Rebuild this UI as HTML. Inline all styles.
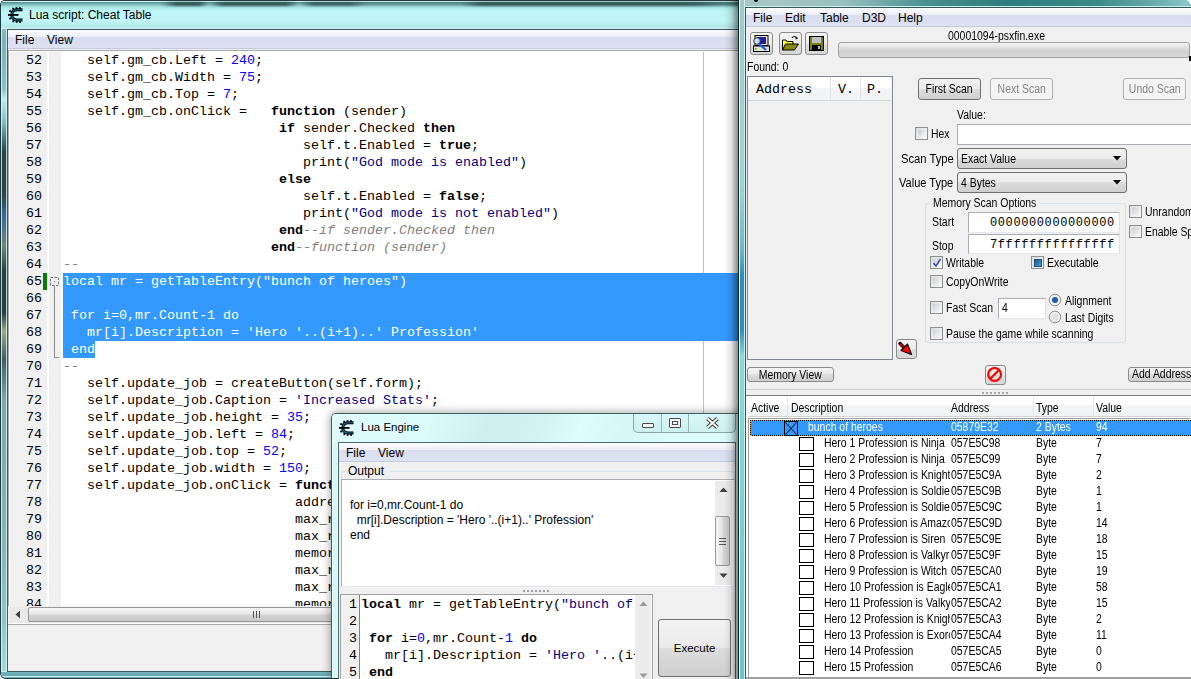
<!DOCTYPE html><html><head><meta charset="utf-8"><style>
*{margin:0;padding:0;box-sizing:border-box}
html,body{width:1191px;height:679px;overflow:hidden;background:#fff}
body{position:relative;font-family:"Liberation Sans",sans-serif;font-size:12px;color:#000}
.a{position:absolute}
.t{position:absolute;white-space:pre;line-height:1}
.mono{font-family:"Liberation Mono",monospace}
.code{position:absolute;white-space:pre;font-family:"Liberation Mono",monospace;font-size:13.333px;line-height:17px;height:17px}
.k{font-weight:bold}
.ms{position:absolute;white-space:pre;line-height:1;font-size:12px;transform:scaleX(0.87);transform-origin:0 0}
.msi{display:inline-block;font-size:12px;transform:scaleX(0.87)}
.n{color:#0000ff}
.s{color:#000080}
.c{color:#808080;font-style:italic}
.sel{color:#fff}
.menubar{position:absolute;background:linear-gradient(#fdfdfe 0,#f4f5fa 2px,#e6e9f5 6px,#dadff0 10px,#dde1f0 17px,#c5c9dc 18px)}
.cb{position:absolute;width:13px;height:13px;border:1px solid #8e8f8f;background:linear-gradient(135deg,#dcdcdc,#fafafa)}
.cb::after{content:"";position:absolute;left:2px;top:2px;width:7px;height:7px;background:linear-gradient(135deg,#cbcfd5,#f6f6f6)}
.btn{position:absolute;border:1px solid #707070;border-radius:3px;background:linear-gradient(#f2f2f2 0,#ebebeb 50%,#dddddd 50%,#cfcfcf 100%);text-align:center}
.btnd{position:absolute;border:1px solid #adb2b5;border-radius:3px;background:#f4f4f4;color:#838383;text-align:center}
.combo{position:absolute;border:1px solid #707070;border-radius:3px;background:linear-gradient(#f2f2f2 0,#ebebeb 50%,#dddddd 50%,#cfcfcf 100%)}
.edit{position:absolute;background:#fff;border:1px solid #abadb3;border-top-color:#abadb3;border-left-color:#e2e3ea;border-right-color:#dbdfe6;border-bottom-color:#e3e9ef}
</style></head><body>
<div class="a" style="left:0;top:0;width:760px;height:679px;border:1px solid #1d3b40;border-right:none;border-radius:5px 0 0 6px;overflow:hidden;background:#78b0c0"><div class="a" style="left:0;top:0;width:6px;height:679px;background:linear-gradient(#a8d4d4 0,#80b0b8 40px,#8cc0c8 88px,#c0f0f0 98px,#80b8c0 122px,#284848 150px,#284848 195px,#3a68a0 215px,#708878 245px,#2a4040 270px,#2a4040 312px,#a0a880 330px,#406060 358px,#80a8a8 400px,#88b4b4 540px,#90c4c8 620px,#a8dcdc 679px)"></div><div class="a" style="left:0;top:0;width:1px;height:679px;background:rgba(230,255,255,0.75)"></div><div class="a" style="left:5px;top:28px;width:1px;height:650px;background:rgba(220,255,255,0.8)"></div><div class="a" style="left:0;top:0;width:760px;height:28px;background:linear-gradient(#e0f4f4 0,#e0f4f4 1px,#4f8a8a 1px,#78b4b4 3px,#a8e4e4 6px,#bdf4f4 10px,#c2f6f6 20px,#aee6e6 26px,#cdeeee 27px)"></div><div class="a" style="left:0;top:1px;width:760px;height:4px;filter:blur(1.2px);background:linear-gradient(90deg,rgba(40,80,80,0) 0,rgba(40,80,80,0) 160px,rgba(30,60,60,.8) 175px,rgba(30,60,60,.8) 198px,rgba(40,80,80,0) 208px,rgba(30,60,60,.8) 222px,rgba(30,60,60,.8) 285px,rgba(40,80,80,0) 298px,rgba(30,60,60,.7) 312px,rgba(30,60,60,.7) 350px,rgba(40,80,80,.3) 365px,rgba(40,80,80,.3) 460px,rgba(30,60,60,.8) 480px,rgba(30,60,60,.8) 690px,rgba(30,60,60,.5) 720px)"></div><div class="a" style="left:0;top:670px;width:760px;height:8px;background:linear-gradient(#c8f0f0 0,#c8f0f0 1px,#78b4bc 1px,#64a6b0 5px,#c8f0f0 5px,#c8f0f0 6px,#78b0b8 6px)"></div></div>
<div class="a" style="left:7px;top:29px;width:760px;height:643px;background:#f0f0f0;border:1px solid #3a5a5e;border-right:none"></div>
<svg class="a" style="left:8px;top:7px" width="16" height="16" viewBox="0 0 16 16"><g fill="#000"><rect x="4.2" y="0.8" width="1.8" height="1.8"/><rect x="7.6" y="0.2" width="1.8" height="1.8"/><rect x="11" y="0.2" width="1.8" height="1.8"/><rect x="1.2" y="3.2" width="1.8" height="1.8"/><rect x="1.2" y="10.6" width="1.8" height="1.8"/><rect x="4.4" y="13.4" width="1.8" height="1.8"/><rect x="7.8" y="14" width="1.8" height="1.8"/><rect x="11.2" y="14" width="1.8" height="1.8"/></g><path d="M14.5 2.8 L9 2.8 Q5.5 2.8 4.2 5.5 Q3.2 7.8 4.2 10.2 Q5.5 13 9 13 L14.5 13" fill="none" stroke="#000" stroke-width="3"/><path d="M14 2.8 L9 2.8 Q5.5 2.8 4.2 5.5 Q3.2 7.8 4.2 10.2 Q5.5 13 9 13 L14 13" fill="none" stroke="#1a6ea6" stroke-width="1.1"/><path d="M0 7.9 L10.5 7.9" stroke="#000" stroke-width="1.8"/></svg>
<div class="t" style="left:29px;top:9px;font-size:12px;color:#000;">Lua script: Cheat Table</div>
<div class="a" style="left:8px;top:30px;width:760px;height:19px;background:linear-gradient(#fcfcfe 0,#f7f8fc 2px,#eceef8 7px,#d9ddef 7px,#dde2f2 18px,#c4c8dc 18px)"></div>
<div class="t" style="left:15px;top:34px;font-size:12px">File</div>
<div class="t" style="left:47px;top:34px;font-size:12px">View</div>
<div class="a" style="left:8px;top:49px;width:760px;height:1px;background:#f0f0f0"></div>
<div class="a" style="left:8px;top:50px;width:760px;height:556px;background:#fff;border-top:1px solid #a8a8a8;border-left:1px solid #a8a8a8"></div>
<div class="a" style="left:10px;top:52px;width:37px;height:554px;background:#f0f0f0"></div>
<div class="a" style="left:49px;top:52px;width:12px;height:554px;background:#f0f0f0"></div>
<div class="a" style="left:703px;top:52px;width:1px;height:554px;background:#c0c0c0"></div>
<div class="a" style="left:63px;top:273px;width:720px;height:68px;background:#3399ff"></div>
<div class="a" style="left:63px;top:341px;width:32px;height:17px;background:#3399ff"></div>
<div class="a" style="left:8px;top:52px;width:730px;height:554px;overflow:hidden">
<div class="code" style="left:55px;top:0px">   self.gm_cb.Left = <span class="n">240</span>;</div>
<div class="code" style="left:18px;top:0px;width:16px;text-align:right">52</div>
<div class="code" style="left:55px;top:17px">   self.gm_cb.Width = <span class="n">75</span>;</div>
<div class="code" style="left:18px;top:17px;width:16px;text-align:right">53</div>
<div class="code" style="left:55px;top:34px">   self.gm_cb.Top = <span class="n">7</span>;</div>
<div class="code" style="left:18px;top:34px;width:16px;text-align:right">54</div>
<div class="code" style="left:55px;top:51px">   self.gm_cb.onClick =   <span class="k">function</span> (sender)</div>
<div class="code" style="left:18px;top:51px;width:16px;text-align:right">55</div>
<div class="code" style="left:55px;top:68px">                           <span class="k">if</span> sender.Checked <span class="k">then</span></div>
<div class="code" style="left:18px;top:68px;width:16px;text-align:right">56</div>
<div class="code" style="left:55px;top:85px">                              self.t.Enabled = <span class="k">true</span>;</div>
<div class="code" style="left:18px;top:85px;width:16px;text-align:right">57</div>
<div class="code" style="left:55px;top:102px">                              print(<span class="s">"God mode is enabled"</span>)</div>
<div class="code" style="left:18px;top:102px;width:16px;text-align:right">58</div>
<div class="code" style="left:55px;top:119px">                           <span class="k">else</span></div>
<div class="code" style="left:18px;top:119px;width:16px;text-align:right">59</div>
<div class="code" style="left:55px;top:136px">                              self.t.Enabled = <span class="k">false</span>;</div>
<div class="code" style="left:18px;top:136px;width:16px;text-align:right">60</div>
<div class="code" style="left:55px;top:153px">                              print(<span class="s">"God mode is not enabled"</span>)</div>
<div class="code" style="left:18px;top:153px;width:16px;text-align:right">61</div>
<div class="code" style="left:55px;top:170px">                           <span class="k">end</span><span class="c">--if sender.Checked then</span></div>
<div class="code" style="left:18px;top:170px;width:16px;text-align:right">62</div>
<div class="code" style="left:55px;top:187px">                          <span class="k">end</span><span class="c">--function (sender)</span></div>
<div class="code" style="left:18px;top:187px;width:16px;text-align:right">63</div>
<div class="code" style="left:55px;top:204px"><span class="c">--</span></div>
<div class="code" style="left:18px;top:204px;width:16px;text-align:right">64</div>
<div class="code" style="left:55px;top:221px"><span class="sel">local mr = getTableEntry("bunch of heroes")</span></div>
<div class="code" style="left:18px;top:221px;width:16px;text-align:right">65</div>
<div class="code" style="left:55px;top:238px"><span class="sel"></span></div>
<div class="code" style="left:18px;top:238px;width:16px;text-align:right">66</div>
<div class="code" style="left:55px;top:255px"><span class="sel"> for i=0,mr.Count-1 do</span></div>
<div class="code" style="left:18px;top:255px;width:16px;text-align:right">67</div>
<div class="code" style="left:55px;top:272px"><span class="sel">   mr[i].Description = 'Hero '..(i+1)..' Profession'</span></div>
<div class="code" style="left:18px;top:272px;width:16px;text-align:right">68</div>
<div class="code" style="left:55px;top:289px"><span class="sel"> end</span></div>
<div class="code" style="left:18px;top:289px;width:16px;text-align:right">69</div>
<div class="code" style="left:55px;top:306px"><span class="c">--</span></div>
<div class="code" style="left:18px;top:306px;width:16px;text-align:right">70</div>
<div class="code" style="left:55px;top:323px">   self.update_job = createButton(self.form);</div>
<div class="code" style="left:18px;top:323px;width:16px;text-align:right">71</div>
<div class="code" style="left:55px;top:340px">   self.update_job.Caption = <span class="s">'Increased Stats'</span>;</div>
<div class="code" style="left:18px;top:340px;width:16px;text-align:right">72</div>
<div class="code" style="left:55px;top:357px">   self.update_job.height = <span class="n">35</span>;</div>
<div class="code" style="left:18px;top:357px;width:16px;text-align:right">73</div>
<div class="code" style="left:55px;top:374px">   self.update_job.left = <span class="n">84</span>;</div>
<div class="code" style="left:18px;top:374px;width:16px;text-align:right">74</div>
<div class="code" style="left:55px;top:391px">   self.update_job.top = <span class="n">52</span>;</div>
<div class="code" style="left:18px;top:391px;width:16px;text-align:right">75</div>
<div class="code" style="left:55px;top:408px">   self.update_job.width = <span class="n">150</span>;</div>
<div class="code" style="left:18px;top:408px;width:16px;text-align:right">76</div>
<div class="code" style="left:55px;top:425px">   self.update_job.onClick = <span class="k">function</span> (sender)</div>
<div class="code" style="left:18px;top:425px;width:16px;text-align:right">77</div>
<div class="code" style="left:55px;top:442px">                             address = </div>
<div class="code" style="left:18px;top:442px;width:16px;text-align:right">78</div>
<div class="code" style="left:55px;top:459px">                             max_ram = </div>
<div class="code" style="left:18px;top:459px;width:16px;text-align:right">79</div>
<div class="code" style="left:55px;top:476px">                             max_rom = </div>
<div class="code" style="left:18px;top:476px;width:16px;text-align:right">80</div>
<div class="code" style="left:55px;top:493px">                             memory = </div>
<div class="code" style="left:18px;top:493px;width:16px;text-align:right">81</div>
<div class="code" style="left:55px;top:510px">                             max_rec = </div>
<div class="code" style="left:18px;top:510px;width:16px;text-align:right">82</div>
<div class="code" style="left:55px;top:527px">                             max_res = </div>
<div class="code" style="left:18px;top:527px;width:16px;text-align:right">83</div>
<div class="code" style="left:55px;top:544px">                             memory2 = </div>
<div class="code" style="left:18px;top:544px;width:16px;text-align:right">84</div>
</div>
<div class="a" style="left:43px;top:273px;width:4px;height:17px;background:#008000"></div>
<svg class="a" style="left:50px;top:277px" width="10" height="10"><rect x="0.5" y="0.5" width="8" height="8" fill="none" stroke="#707070" stroke-dasharray="2.5 1.5"/><rect x="4" y="4" width="1" height="1" fill="#707070"/></svg>
<div class="a" style="left:54px;top:286px;width:1px;height:72px;background:#8a8a8a"></div>
<div class="a" style="left:54px;top:357px;width:5px;height:1px;background:#909090"></div>
<div class="a" style="left:10px;top:607px;width:760px;height:16px;background:#e9e9e9"></div>
<svg class="a" style="left:15px;top:610px" width="6" height="9"><path d="M5 0.5 L0.5 4.5 L5 8.5 Z" fill="#404040"/></svg>
<div class="a" style="left:28px;top:607px;width:500px;height:15px;border:1px solid #979797;border-radius:2px;background:linear-gradient(#f6f6f6,#e6e6e6 45%,#d4d4d4 55%,#cacaca)"></div>
<div class="a" style="left:253px;top:611px;width:1px;height:7px;background:#555"></div>
<div class="a" style="left:256px;top:611px;width:1px;height:7px;background:#555"></div>
<div class="a" style="left:259px;top:611px;width:1px;height:7px;background:#555"></div>
<div class="a" style="left:8px;top:623px;width:760px;height:1px;background:#fff"></div>
<div class="a" style="left:8px;top:624px;width:760px;height:1px;background:#a8a8a8"></div>
<div class="a" style="left:331px;top:413px;width:420px;height:265px;background:linear-gradient(90deg,#e8ffff 0,#e8ffff 1px,#d8f8f8 1px,#d8f8f8 5px,#e8ffff 6px,#d9f8f8 100%);border-radius:5px 0 0 0;border:1px solid #3f5f63;border-right:none;border-bottom:none;box-shadow:0 0 9px 1px rgba(0,0,0,0.35)"></div>
<div class="a" style="left:332px;top:414px;width:418px;height:28px;background:linear-gradient(112deg,#dffbfb 0,#dcfafa 90px,#cdeff0 150px,#d3f3f3 200px,#ddfcfc 235px,#d6f6f6 280px,#dcfcfc 320px);border-radius:4px 0 0 0"></div>
<svg class="a" style="left:339px;top:420px" width="16" height="16" viewBox="0 0 16 16"><g fill="#000"><rect x="4.2" y="0.8" width="1.8" height="1.8"/><rect x="7.6" y="0.2" width="1.8" height="1.8"/><rect x="11" y="0.2" width="1.8" height="1.8"/><rect x="1.2" y="3.2" width="1.8" height="1.8"/><rect x="1.2" y="10.6" width="1.8" height="1.8"/><rect x="4.4" y="13.4" width="1.8" height="1.8"/><rect x="7.8" y="14" width="1.8" height="1.8"/><rect x="11.2" y="14" width="1.8" height="1.8"/></g><path d="M14.5 2.8 L9 2.8 Q5.5 2.8 4.2 5.5 Q3.2 7.8 4.2 10.2 Q5.5 13 9 13 L14.5 13" fill="none" stroke="#000" stroke-width="3"/><path d="M14 2.8 L9 2.8 Q5.5 2.8 4.2 5.5 Q3.2 7.8 4.2 10.2 Q5.5 13 9 13 L14 13" fill="none" stroke="#1a6ea6" stroke-width="1.1"/><path d="M0 7.9 L10.5 7.9" stroke="#000" stroke-width="1.8"/></svg>
<div class="t" style="left:361px;top:422px;font-size:11.5px">Lua Engine</div>
<div class="a" style="left:633px;top:414px;width:103px;height:19px;border:1px solid #8aa4a8;border-top:none;border-radius:0 0 5px 5px;background:linear-gradient(#d9f6f7,#cdf1f2)"></div>
<div class="a" style="left:661px;top:414px;width:1px;height:18px;background:#9ab4b8"></div>
<div class="a" style="left:688px;top:414px;width:1px;height:18px;background:#9ab4b8"></div>
<div class="a" style="left:642px;top:423px;width:12px;height:5px;border:1px solid #4a4a4a;background:#f4f4f4;border-radius:1px"></div>
<div class="a" style="left:669px;top:418px;width:12px;height:10px;border:1px solid #4a4a4a;background:#f4f4f4;border-radius:1px"></div>
<div class="a" style="left:672px;top:421px;width:6px;height:4px;border:1px solid #4a4a4a"></div>
<svg class="a" style="left:706px;top:417px" width="13" height="12"><path d="M1.5 1.5 L11.5 10.5 M11.5 1.5 L1.5 10.5" stroke="#3a3a3a" stroke-width="4"/><path d="M1.5 1.5 L11.5 10.5 M11.5 1.5 L1.5 10.5" stroke="#f4f4f4" stroke-width="2"/></svg>
<div class="a" style="left:338px;top:442px;width:400px;height:237px;background:#f0f0f0;border:1px solid #4a6a6e;border-right:none;border-bottom:none"></div>
<div class="a" style="left:339px;top:443px;width:399px;height:19px;background:linear-gradient(#fcfcfe 0,#f7f8fc 2px,#eceef8 7px,#d9ddef 7px,#dde2f2 18px,#c4c8dc 18px)"></div>
<div class="t" style="left:346px;top:447px;font-size:12px">File</div>
<div class="t" style="left:378px;top:447px;font-size:12px">View</div>
<div class="a" style="left:735px;top:442px;width:3px;height:237px;background:linear-gradient(90deg,#4a6a6e 0,#4a6a6e 1px,#e0fcfc 1px)"></div>
<div class="a" style="left:341px;top:471px;width:394px;height:116px;border:1px solid #d5dfe5;border-radius:3px"></div>
<div class="a" style="left:346px;top:464px;width:44px;height:14px;background:#f0f0f0"></div>
<div class="t" style="left:348px;top:465px;font-size:12px">Output</div>
<div class="a" style="left:341px;top:479px;width:394px;height:108px;background:#fff;border:1px solid #abadb3;border-right-color:#dbdfe6;border-bottom-color:#e3e9ef"></div>
<div class="t" style="left:350px;top:499px;font-size:12px">for i=0,mr.Count-1 do</div>
<div class="t" style="left:350px;top:514px;font-size:12px">  mr[i].Description = 'Hero '..(i+1)..' Profession'</div>
<div class="t" style="left:350px;top:529px;font-size:12px">end</div>
<div class="a" style="left:715px;top:481px;width:17px;height:104px;background:#ececec"></div>
<svg class="a" style="left:719px;top:487px" width="9" height="6"><path d="M0.5 5 L4.5 0.5 L8.5 5 Z" fill="#404040"/></svg>
<svg class="a" style="left:719px;top:573px" width="9" height="6"><path d="M0.5 0.5 L4.5 5 L8.5 0.5 Z" fill="#404040"/></svg>
<div class="a" style="left:715px;top:516px;width:15px;height:50px;border:1px solid #979797;border-radius:2px;background:linear-gradient(90deg,#f6f6f6,#e6e6e6 45%,#d4d4d4 55%,#cacaca)"></div>
<div class="a" style="left:719px;top:538px;width:7px;height:1px;background:#555"></div>
<div class="a" style="left:719px;top:541px;width:7px;height:1px;background:#555"></div>
<div class="a" style="left:719px;top:544px;width:7px;height:1px;background:#555"></div>
<div class="a" style="left:523px;top:590px;width:2px;height:2px;background:#a0a0a0"></div>
<div class="a" style="left:527px;top:590px;width:2px;height:2px;background:#a0a0a0"></div>
<div class="a" style="left:531px;top:590px;width:2px;height:2px;background:#a0a0a0"></div>
<div class="a" style="left:535px;top:590px;width:2px;height:2px;background:#a0a0a0"></div>
<div class="a" style="left:539px;top:590px;width:2px;height:2px;background:#a0a0a0"></div>
<div class="a" style="left:543px;top:590px;width:2px;height:2px;background:#a0a0a0"></div>
<div class="a" style="left:547px;top:590px;width:2px;height:2px;background:#a0a0a0"></div>
<div class="a" style="left:340px;top:594px;width:313px;height:90px;background:#fff;border:1px solid #a0a0a0"></div>
<div class="a" style="left:341px;top:595px;width:18px;height:90px;background:#f0f0f0"></div>
<div class="a" style="left:359px;top:595px;width:1px;height:90px;background:#808080"></div>
<div class="a" style="left:341px;top:595px;width:294px;height:84px;overflow:hidden">
<div class="code" style="left:20px;top:1px"><span class="k">local</span> mr = getTableEntry(<span class="s">"bunch of heroes"</span>)</div>
<div class="code" style="left:8px;top:1px">1</div>
<div class="code" style="left:20px;top:18px"></div>
<div class="code" style="left:8px;top:18px">2</div>
<div class="code" style="left:20px;top:35px"> <span class="k">for</span> i=<span class="n">0</span>,mr.Count-<span class="n">1</span> <span class="k">do</span></div>
<div class="code" style="left:8px;top:35px">3</div>
<div class="code" style="left:20px;top:52px">   mr[i].Description = <span class="s">'Hero '</span>..(i+1)..<span class="s">' Profession'</span></div>
<div class="code" style="left:8px;top:52px">4</div>
<div class="code" style="left:20px;top:69px"> <span class="k">end</span></div>
<div class="code" style="left:8px;top:69px">5</div>
</div>
<div class="a" style="left:635px;top:595px;width:16px;height:84px;background:#ececec"></div>
<svg class="a" style="left:639px;top:601px" width="9" height="6"><path d="M0.5 5 L4.5 0.5 L8.5 5 Z" fill="#9a9a9a"/></svg>
<svg class="a" style="left:639px;top:673px" width="9" height="6"><path d="M0.5 0.5 L4.5 5 L8.5 0.5 Z" fill="#9a9a9a"/></svg>
<div class="btn" style="left:658px;top:619px;width:73px;height:58px;line-height:56px;font-size:11.5px">Execute</div>
<div class="a" style="left:724px;top:0px;width:14px;height:679px;background:linear-gradient(90deg,rgba(0,0,0,0),rgba(0,0,0,0.1) 50%,rgba(0,0,0,0.45))"></div>
<div class="a" style="left:738px;top:0px;width:460px;height:679px;background:linear-gradient(90deg,#14282a 0,#14282a 1px,#e0fafa 1px,#e0fafa 2px,#88c4c4 2px,#8cd0d0 6px,#d0f2f2 6px,#d0f2f2 7px,#335a5a 7px,#335a5a 8px)"></div>
<div class="a" style="left:740px;top:0px;width:4px;height:679px;background:linear-gradient(#a0c8c8 0,#a8d0d0 150px,#9cd4d4 185px,#6cb8c8 250px,#2a90c0 275px,#2a90c0 330px,#88d8d8 356px,#80d4d4 440px,#70c4c4 679px)"></div>
<div class="a" style="left:745px;top:0px;width:460px;height:8px;background:linear-gradient(rgba(0,0,0,0) 0,rgba(0,0,0,0) 6px,#d0f0f0 6px,#d0f0f0 7px,#305858 7px),linear-gradient(90deg,#a8c8c8 0,#98c0c0 100px,#4a9090 180px,#2f7c7e 260px,#3a8a8a 350px,#60a6a6 400px,#88c4c4 440px)"></div>
<div class="a" style="left:746px;top:8px;width:460px;height:671px;background:#f0f0f0"></div>
<div class="a" style="left:746px;top:8px;width:460px;height:19px;background:linear-gradient(#fcfcfe 0,#f7f8fc 2px,#eceef8 7px,#d9ddef 7px,#dde2f2 18px,#c4c8dc 18px)"></div>
<div class="t" style="left:753px;top:12px;font-size:12px">File</div>
<div class="t" style="left:785px;top:12px;font-size:12px">Edit</div>
<div class="t" style="left:820px;top:12px;font-size:12px">Table</div>
<div class="t" style="left:862px;top:12px;font-size:12px">D3D</div>
<div class="t" style="left:898px;top:12px;font-size:12px">Help</div>
<div class="a" style="left:750px;top:32px;width:23px;height:23px;border:1px solid #8a8a8a;border-radius:3px;background:linear-gradient(#f4f4f4,#ececec 50%,#dedede 50%,#d6d6d6)"></div>
<div class="a" style="left:779px;top:32px;width:23px;height:23px;border:1px solid #8a8a8a;border-radius:3px;background:linear-gradient(#f4f4f4,#ececec 50%,#dedede 50%,#d6d6d6)"></div>
<div class="a" style="left:805px;top:32px;width:23px;height:23px;border:1px solid #8a8a8a;border-radius:3px;background:linear-gradient(#f4f4f4,#ececec 50%,#dedede 50%,#d6d6d6)"></div>
<svg class="a" style="left:753px;top:35px" width="17" height="17" viewBox="0 0 17 17">
<rect x="2" y="0.5" width="13" height="10" fill="#e8e4d0" stroke="#000" stroke-width="1"/>
<rect x="4" y="2" width="9" height="7" fill="#2020a0"/>
<rect x="0.5" y="11" width="16" height="5.5" fill="#e8e4d0" stroke="#000" stroke-width="1"/>
<circle cx="4" cy="6" r="3.3" fill="#c8e0ff" stroke="#303030" stroke-width="1"/>
<path d="M6 9 L13 15" stroke="#1060ff" stroke-width="2.2"/>
<rect x="2" y="13" width="1.5" height="1.5" fill="#00c000"/>
</svg>
<svg class="a" style="left:782px;top:35px" width="17" height="16" viewBox="0 0 17 16">
<path d="M10 3 Q12 0 15 3" fill="none" stroke="#000" stroke-width="1.2"/><path d="M14 1.5 L16 3.5 L13.5 4.5Z" fill="#000"/>
<path d="M0.5 5 L4 5 L5 6.5 L11 6.5 L11 9 L0.5 15 Z" fill="#ffff40" stroke="#000" stroke-width="1"/>
<path d="M3.5 9 L16.5 9 L12.5 15 L0.5 15 Z" fill="#8a8a10" stroke="#000" stroke-width="1"/>
</svg>
<svg class="a" style="left:809px;top:36px" width="15" height="15" viewBox="0 0 15 15">
<rect x="0" y="0" width="15" height="15" fill="#000"/>
<rect x="1" y="1" width="13" height="13" fill="#808000"/>
<rect x="3" y="1" width="9" height="6" fill="#c0c0c0"/>
<rect x="3" y="9" width="9" height="5" fill="#000"/>
<rect x="9" y="10" width="2" height="3" fill="#c0c0c0"/>
</svg>
<div class="ms" style="left:948px;top:30px;">00001094-psxfin.exe</div>
<div class="a" style="left:838px;top:42px;width:352px;height:16px;border:1px solid #a0a0a0;border-radius:3px;background:linear-gradient(#f4f4f4 0,#dcdcdc 40%,#cfcfcf 60%,#d8d8d8)"></div>
<div class="a" style="left:1189px;top:56px;width:3px;height:5px;background:#000"></div>
<div class="a" style="left:754px;top:0px;width:4px;height:2px;background:#000;border-radius:0 0 2px 2px"></div>
<svg class="a" style="left:1186px;top:0" width="5" height="5"><path d="M0 0 H5 V4 H4 V3 H3 V1 H1 V0Z" fill="#fff"/></svg>
<div class="ms" style="left:747px;top:61px;">Found: 0</div>
<div class="a" style="left:747px;top:76px;width:146px;height:284px;background:#f0f0f0;border:1px solid #828790"></div>
<div class="a" style="left:748px;top:77px;width:143px;height:24px;background:linear-gradient(#fff 0,#fff 45%,#f3f4f6 50%,#f1f2f4 100%);border-bottom:1px solid #d5d5d5"></div>
<div class="a" style="left:830px;top:77px;width:1px;height:23px;background:#e4e5e7"></div>
<div class="a" style="left:860px;top:77px;width:1px;height:23px;background:#e4e5e7"></div>
<div class="t" style="left:756px;top:83px;font-family:'Liberation Mono',monospace;font-size:13.33px">Address</div>
<div class="t" style="left:838px;top:83px;font-family:'Liberation Mono',monospace;font-size:13.33px">V.</div>
<div class="t" style="left:867px;top:83px;font-family:'Liberation Mono',monospace;font-size:13.33px">P.</div>
<div class="btn" style="left:918px;top:78px;width:63px;height:22px;line-height:20px;"><span class="msi">First Scan</span></div>
<div class="btnd" style="left:990px;top:78px;width:63px;height:22px;line-height:20px;"><span class="msi">Next Scan</span></div>
<div class="btnd" style="left:1123px;top:78px;width:63px;height:22px;line-height:20px;"><span class="msi">Undo Scan</span></div>
<div class="ms" style="left:957px;top:109px;">Value:</div>
<div class="cb" style="left:915px;top:127px"></div>
<div class="ms" style="left:931px;top:128px;">Hex</div>
<div class="a" style="left:957px;top:124px;width:240px;height:21px;background:#fff;border:1px solid #abadb3;border-right:none"></div>
<div class="ms" style="left:901px;top:153px;transform:scaleX(0.935)">Scan Type</div>
<div class="ms" style="left:899px;top:177px;transform:scaleX(0.92)">Value Type</div>
<div class="combo" style="left:957px;top:148px;width:170px;height:21px"></div>
<div class="ms" style="left:961px;top:153px;">Exact Value</div>
<svg class="a" style="left:1113px;top:156px" width="8" height="5"><path d="M0 0 L8 0 L4 4.5 Z" fill="#000"/></svg>
<div class="combo" style="left:957px;top:172px;width:170px;height:21px"></div>
<div class="ms" style="left:961px;top:177px;">4 Bytes</div>
<svg class="a" style="left:1113px;top:180px" width="8" height="5"><path d="M0 0 L8 0 L4 4.5 Z" fill="#000"/></svg>
<div class="a" style="left:925px;top:203px;width:201px;height:140px;border:1px solid #d5dfe5;border-radius:3px"></div>
<div class="a" style="left:930px;top:196px;width:110px;height:14px;background:#f0f0f0"></div>
<div class="ms" style="left:933px;top:197px;">Memory Scan Options</div>
<div class="ms" style="left:932px;top:216px;">Start</div>
<div class="ms" style="left:932px;top:240px;">Stop</div>
<div class="a" style="left:968px;top:212px;width:152px;height:21px;background:#fff;border:1px solid #abadb3;border-right-color:#dbdfe6;border-bottom-color:#e3e9ef"></div>
<div class="a" style="left:968px;top:234px;width:152px;height:20px;background:#fff;border:1px solid #abadb3;border-right-color:#dbdfe6;border-bottom-color:#e3e9ef"></div>
<div class="t" style="left:990px;top:217px;font-family:'Liberation Mono',monospace;font-size:12px;letter-spacing:0.6px">0000000000000000</div>
<div class="t" style="left:990px;top:239px;font-family:'Liberation Mono',monospace;font-size:12px;letter-spacing:0.6px">7fffffffffffffff</div>
<div class="cb" style="left:930px;top:256px"></div>
<svg class="a" style="left:932px;top:258px" width="10" height="10"><path d="M1.5 5 L4 8 L8.5 1" fill="none" stroke="#3a52a8" stroke-width="1.6"/></svg>
<div class="ms" style="left:946px;top:257px;">Writable</div>
<div class="cb" style="left:1031px;top:256px"></div>
<div class="a" style="left:1034px;top:259px;width:8px;height:8px;background:linear-gradient(135deg,#1a5c9a,#3ea0d8);border:1px solid #20507e"></div>
<div class="ms" style="left:1047px;top:257px;">Executable</div>
<div class="cb" style="left:930px;top:275px"></div>
<div class="ms" style="left:946px;top:276px;">CopyOnWrite</div>
<div class="cb" style="left:930px;top:301px"></div>
<div class="ms" style="left:946px;top:302px;">Fast Scan</div>
<div class="a" style="left:998px;top:298px;width:48px;height:21px;background:#fff;border:1px solid #abadb3;border-right-color:#dbdfe6;border-bottom-color:#e3e9ef"></div>
<div class="ms" style="left:1002px;top:302px;">4</div>
<svg class="a" style="left:1048px;top:293px" width="14" height="14"><circle cx="7" cy="7" r="5.8" fill="#f0f0f0" stroke="#8e8f8f"/><circle cx="7" cy="7" r="3" fill="#1f5fa6"/></svg>
<div class="ms" style="left:1065px;top:295px;">Alignment</div>
<svg class="a" style="left:1048px;top:310px" width="14" height="14"><circle cx="7" cy="7" r="5.8" fill="#f0f0f0" stroke="#8e8f8f"/><circle cx="7" cy="7" r="3.5" fill="#e0e0e0"/></svg>
<div class="ms" style="left:1065px;top:312px;">Last Digits</div>
<div class="cb" style="left:930px;top:327px"></div>
<div class="ms" style="left:946px;top:328px;">Pause the game while scanning</div>
<div class="cb" style="left:1129px;top:205px"></div>
<div class="ms" style="left:1145px;top:206px;">Unrandomizer</div>
<div class="cb" style="left:1129px;top:225px"></div>
<div class="ms" style="left:1145px;top:226px;">Enable Speedhack</div>
<div class="a" style="left:896px;top:339px;width:21px;height:20px;border:1px solid #8a8a8a;border-radius:3px;background:linear-gradient(#f4f4f4,#ececec 50%,#dedede 50%,#d6d6d6)"></div>
<svg class="a" style="left:896px;top:339px" width="21" height="20"><path d="M4 4.5 L10 10.5" stroke="#000" stroke-width="3.4" stroke-linecap="round"/><path d="M4 4.5 L10 10.5" stroke="#f00" stroke-width="1.3"/><path d="M11.5 5 L5 11.5 L15.5 15.5 Z" fill="#f00" stroke="#000" stroke-width="1.1" stroke-linejoin="round"/></svg>
<div class="btn" style="left:747px;top:367px;width:87px;height:15px;line-height:14px;border-color:#8a8a8a"><span class="msi">Memory View</span></div>
<div class="a" style="left:985px;top:365px;width:21px;height:20px;border:1px solid #8a8a8a;border-radius:3px;background:linear-gradient(#f4f4f4,#ececec 50%,#dedede 50%,#d6d6d6)"></div>
<svg class="a" style="left:987px;top:367px" width="16" height="16"><circle cx="7.6" cy="7.4" r="6.4" fill="none" stroke="#ff0000" stroke-width="2.2"/><path d="M3.2 11.8 L12 3" stroke="#ff0000" stroke-width="2.2"/></svg>
<div class="btn" style="left:1128px;top:367px;width:80px;height:15px;line-height:13px;font-size:10.5px;text-align:left;padding-left:3px;border-color:#8a8a8a"><span class="msi" style="transform-origin:0 0">Add Address</span></div>
<div class="a" style="left:746px;top:389px;width:460px;height:1px;background:#d0d0d0"></div>
<div class="a" style="left:982px;top:392px;width:2px;height:2px;background:#a8a8a8"></div>
<div class="a" style="left:986px;top:392px;width:2px;height:2px;background:#a8a8a8"></div>
<div class="a" style="left:990px;top:392px;width:2px;height:2px;background:#a8a8a8"></div>
<div class="a" style="left:994px;top:392px;width:2px;height:2px;background:#a8a8a8"></div>
<div class="a" style="left:998px;top:392px;width:2px;height:2px;background:#a8a8a8"></div>
<div class="a" style="left:1002px;top:392px;width:2px;height:2px;background:#a8a8a8"></div>
<div class="a" style="left:1006px;top:392px;width:2px;height:2px;background:#a8a8a8"></div>
<div class="a" style="left:746px;top:395px;width:460px;height:1px;background:#7a7a7a"></div>
<div class="a" style="left:746px;top:396px;width:460px;height:283px;background:#fff"></div>
<div class="a" style="left:748px;top:397px;width:460px;height:20px;background:linear-gradient(#fff 0,#fff 40%,#f3f4f6 45%,#f1f2f4 100%);border-bottom:1px solid #d5d5d5"></div>
<div class="a" style="left:748px;top:418px;width:460px;height:261px;border-left:1px solid #a0a0a0;border-top:1px solid #a0a0a0"></div>
<div class="a" style="left:787px;top:397px;width:1px;height:19px;background:#e4e5e7"></div>
<div class="a" style="left:1033px;top:397px;width:1px;height:19px;background:#e4e5e7"></div>
<div class="a" style="left:1093px;top:397px;width:1px;height:19px;background:#e4e5e7"></div>
<div class="ms" style="left:751px;top:402px;">Active</div>
<div class="ms" style="left:791px;top:402px;">Description</div>
<div class="ms" style="left:951px;top:402px;">Address</div>
<div class="ms" style="left:1036px;top:402px;">Type</div>
<div class="ms" style="left:1096px;top:402px;">Value</div>
<div class="a" style="left:750px;top:420px;width:460px;height:16px;background:#3399ff"></div>
<div class="a" style="left:750px;top:420px;width:460px;height:1px;background:repeating-linear-gradient(90deg,#000 0,#000 1px,#f0a020 1px,#f0a020 2px)"></div>
<div class="a" style="left:750px;top:435px;width:460px;height:1px;background:repeating-linear-gradient(90deg,#000 0,#000 1px,#f0a020 1px,#f0a020 2px)"></div>
<div class="a" style="left:750px;top:420px;width:1px;height:16px;background:repeating-linear-gradient(#000 0,#000 1px,#f0a020 1px,#f0a020 2px)"></div>
<div class="a" style="left:784px;top:421px;width:14px;height:15px;border:1px solid #000;background:#3399ff"></div>
<svg class="a" style="left:785px;top:422px" width="12" height="13"><path d="M0.5 0.5 L11.5 12.5 M11.5 0.5 L0.5 12.5" stroke="#000" stroke-width="1"/></svg>
<div class="ms" style="left:808px;top:421px;color:#fff">bunch of heroes</div>
<div class="ms" style="left:951px;top:421px;color:#fff">05879E32</div>
<div class="ms" style="left:1036px;top:421px;color:#fff">2 Bytes</div>
<div class="ms" style="left:1096px;top:421px;color:#fff">94</div>
<div class="a" style="left:799px;top:437px;width:15px;height:14px;border:1px solid #000;background:#fff"></div>
<div class="a" style="left:824px;top:437px;width:126px;height:15px;overflow:hidden"><div class="ms" style="left:0;top:0">Hero 1 Profession is Ninja</div></div>
<div class="ms" style="left:951px;top:437px;">057E5C98</div>
<div class="ms" style="left:1036px;top:437px;">Byte</div>
<div class="ms" style="left:1096px;top:437px;">7</div>
<div class="a" style="left:799px;top:453px;width:15px;height:14px;border:1px solid #000;background:#fff"></div>
<div class="a" style="left:824px;top:453px;width:126px;height:15px;overflow:hidden"><div class="ms" style="left:0;top:0">Hero 2 Profession is Ninja</div></div>
<div class="ms" style="left:951px;top:453px;">057E5C99</div>
<div class="ms" style="left:1036px;top:453px;">Byte</div>
<div class="ms" style="left:1096px;top:453px;">7</div>
<div class="a" style="left:799px;top:469px;width:15px;height:14px;border:1px solid #000;background:#fff"></div>
<div class="a" style="left:824px;top:469px;width:126px;height:15px;overflow:hidden"><div class="ms" style="left:0;top:0">Hero 3 Profession is Knight</div></div>
<div class="ms" style="left:951px;top:469px;">057E5C9A</div>
<div class="ms" style="left:1036px;top:469px;">Byte</div>
<div class="ms" style="left:1096px;top:469px;">2</div>
<div class="a" style="left:799px;top:485px;width:15px;height:14px;border:1px solid #000;background:#fff"></div>
<div class="a" style="left:824px;top:485px;width:126px;height:15px;overflow:hidden"><div class="ms" style="left:0;top:0">Hero 4 Profession is Soldier</div></div>
<div class="ms" style="left:951px;top:485px;">057E5C9B</div>
<div class="ms" style="left:1036px;top:485px;">Byte</div>
<div class="ms" style="left:1096px;top:485px;">1</div>
<div class="a" style="left:799px;top:501px;width:15px;height:14px;border:1px solid #000;background:#fff"></div>
<div class="a" style="left:824px;top:501px;width:126px;height:15px;overflow:hidden"><div class="ms" style="left:0;top:0">Hero 5 Profession is Soldier</div></div>
<div class="ms" style="left:951px;top:501px;">057E5C9C</div>
<div class="ms" style="left:1036px;top:501px;">Byte</div>
<div class="ms" style="left:1096px;top:501px;">1</div>
<div class="a" style="left:799px;top:517px;width:15px;height:14px;border:1px solid #000;background:#fff"></div>
<div class="a" style="left:824px;top:517px;width:126px;height:15px;overflow:hidden"><div class="ms" style="left:0;top:0">Hero 6 Profession is Amazon</div></div>
<div class="ms" style="left:951px;top:517px;">057E5C9D</div>
<div class="ms" style="left:1036px;top:517px;">Byte</div>
<div class="ms" style="left:1096px;top:517px;">14</div>
<div class="a" style="left:799px;top:533px;width:15px;height:14px;border:1px solid #000;background:#fff"></div>
<div class="a" style="left:824px;top:533px;width:126px;height:15px;overflow:hidden"><div class="ms" style="left:0;top:0">Hero 7 Profession is Siren</div></div>
<div class="ms" style="left:951px;top:533px;">057E5C9E</div>
<div class="ms" style="left:1036px;top:533px;">Byte</div>
<div class="ms" style="left:1096px;top:533px;">18</div>
<div class="a" style="left:799px;top:549px;width:15px;height:14px;border:1px solid #000;background:#fff"></div>
<div class="a" style="left:824px;top:549px;width:126px;height:15px;overflow:hidden"><div class="ms" style="left:0;top:0">Hero 8 Profession is Valkyrie</div></div>
<div class="ms" style="left:951px;top:549px;">057E5C9F</div>
<div class="ms" style="left:1036px;top:549px;">Byte</div>
<div class="ms" style="left:1096px;top:549px;">15</div>
<div class="a" style="left:799px;top:565px;width:15px;height:14px;border:1px solid #000;background:#fff"></div>
<div class="a" style="left:824px;top:565px;width:126px;height:15px;overflow:hidden"><div class="ms" style="left:0;top:0">Hero 9 Profession is Witch</div></div>
<div class="ms" style="left:951px;top:565px;">057E5CA0</div>
<div class="ms" style="left:1036px;top:565px;">Byte</div>
<div class="ms" style="left:1096px;top:565px;">19</div>
<div class="a" style="left:799px;top:581px;width:15px;height:14px;border:1px solid #000;background:#fff"></div>
<div class="a" style="left:824px;top:581px;width:126px;height:15px;overflow:hidden"><div class="ms" style="left:0;top:0">Hero 10 Profession is Eagle</div></div>
<div class="ms" style="left:951px;top:581px;">057E5CA1</div>
<div class="ms" style="left:1036px;top:581px;">Byte</div>
<div class="ms" style="left:1096px;top:581px;">58</div>
<div class="a" style="left:799px;top:597px;width:15px;height:14px;border:1px solid #000;background:#fff"></div>
<div class="a" style="left:824px;top:597px;width:126px;height:15px;overflow:hidden"><div class="ms" style="left:0;top:0">Hero 11 Profession is Valkyrie</div></div>
<div class="ms" style="left:951px;top:597px;">057E5CA2</div>
<div class="ms" style="left:1036px;top:597px;">Byte</div>
<div class="ms" style="left:1096px;top:597px;">15</div>
<div class="a" style="left:799px;top:613px;width:15px;height:14px;border:1px solid #000;background:#fff"></div>
<div class="a" style="left:824px;top:613px;width:126px;height:15px;overflow:hidden"><div class="ms" style="left:0;top:0">Hero 12 Profession is Knight</div></div>
<div class="ms" style="left:951px;top:613px;">057E5CA3</div>
<div class="ms" style="left:1036px;top:613px;">Byte</div>
<div class="ms" style="left:1096px;top:613px;">2</div>
<div class="a" style="left:799px;top:629px;width:15px;height:14px;border:1px solid #000;background:#fff"></div>
<div class="a" style="left:824px;top:629px;width:126px;height:15px;overflow:hidden"><div class="ms" style="left:0;top:0">Hero 13 Profession is Exorcist</div></div>
<div class="ms" style="left:951px;top:629px;">057E5CA4</div>
<div class="ms" style="left:1036px;top:629px;">Byte</div>
<div class="ms" style="left:1096px;top:629px;">11</div>
<div class="a" style="left:799px;top:645px;width:15px;height:14px;border:1px solid #000;background:#fff"></div>
<div class="a" style="left:824px;top:645px;width:126px;height:15px;overflow:hidden"><div class="ms" style="left:0;top:0">Hero 14 Profession</div></div>
<div class="ms" style="left:951px;top:645px;">057E5CA5</div>
<div class="ms" style="left:1036px;top:645px;">Byte</div>
<div class="ms" style="left:1096px;top:645px;">0</div>
<div class="a" style="left:799px;top:661px;width:15px;height:14px;border:1px solid #000;background:#fff"></div>
<div class="a" style="left:824px;top:661px;width:126px;height:15px;overflow:hidden"><div class="ms" style="left:0;top:0">Hero 15 Profession</div></div>
<div class="ms" style="left:951px;top:661px;">057E5CA6</div>
<div class="ms" style="left:1036px;top:661px;">Byte</div>
<div class="ms" style="left:1096px;top:661px;">0</div>
<div class="a" style="left:746px;top:677px;width:445px;height:2px;background:#a0a0a0"></div>
</body></html>
